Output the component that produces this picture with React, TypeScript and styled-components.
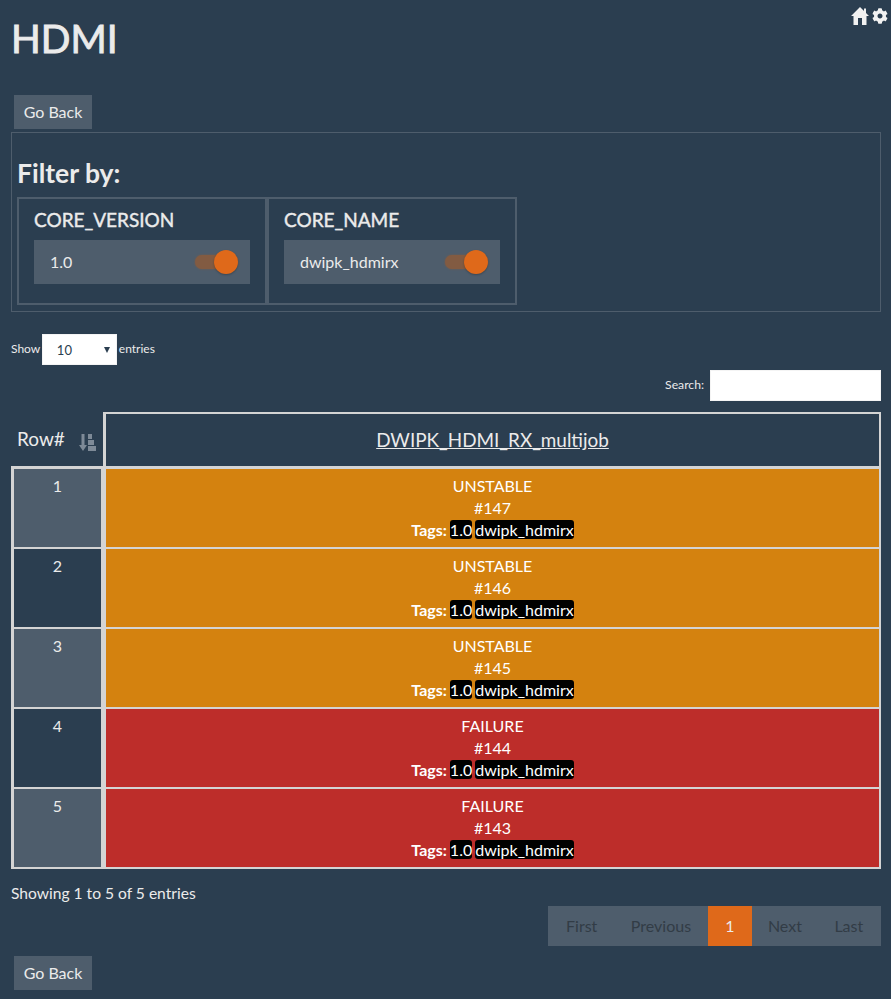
import React from "react";
import styled, { createGlobalStyle } from "styled-components";
import { FaCog } from "react-icons/fa";

const Global = createGlobalStyle`
  html, body { margin: 0; padding: 0; background: #2b3e50; }
  body { font-family: Lato, "Liberation Sans", sans-serif; font-size: 16px; color: #ebebeb; line-height: 22px; }
`;
const Page = styled.div`position: relative; box-sizing: border-box; width: 891px; height: 999px; padding: 0 10px 0 11px; overflow: hidden;`;
const TopIcons = styled.div`position: absolute; top: 7px; right: 3px; display: flex; gap: 3px; color: #f2f2f2; line-height: 0;`;
const GearIcon = styled(FaCog)`margin-top: 1px; width: 16px; height: 16px;`;
const Title = styled.h1`margin: 0; padding-top: 17px; font-size: 39px; line-height: 43px; font-weight: 400; height: 78px; -webkit-text-stroke: 0.9px #ebebeb;`;
const GoBack = styled.button`
  display: block; margin-left: 3px; width: 78px; height: 34px; padding: 0 0 2px; border: 0; border-radius: 0;
  background: #4e5d6c; color: #ebebeb; font: 400 16px Lato, sans-serif;
`;
const FilterPanel = styled.section`margin-top: 3px; height: 178px; border: 1px solid #4e5d6c; padding: 0 5px;`;
const FilterTitle = styled.h3`margin: 0; padding-top: 24px; height: 40px; font-size: 26.5px; line-height: 32px; font-weight: 700;`;
const FilterRow = styled.div`display: flex; gap: 0;`;
const FilterBox = styled.div`width: 250px; height: 108px; box-sizing: border-box; border: 2px solid #4e5d6c; padding: 0 15px;`;
const FilterName = styled.h4`margin: 0; padding-top: 10px; height: 31px; font-size: 19px; line-height: 22px; font-weight: 400; -webkit-text-stroke: 0.4px #ebebeb;`;
const FilterItem = styled.div`display: flex; align-items: center; justify-content: space-between; height: 44px; background: #4e5d6c; padding: 0 12px 0 16px;`;
const Switch = styled.span`position: relative; display: block; width: 43px; height: 14px; border-radius: 8px; background: #825b42; box-shadow: 0 0 2px #825b42;`;
const Knob = styled.span`position: absolute; right: 0; top: -5px; width: 24px; height: 24px; border-radius: 50%; background: #df691a; box-shadow: 0 1px 2px rgba(0,0,0,.25);`;
const LengthRow = styled.div`margin-top: 22px; display: flex; align-items: flex-start; height: 31px; font-size: 12px; line-height: 29px;`;
const SelectWrap = styled.div`position: relative; margin: 0 2px 0 1.6px; width: 75px; height: 31px;`;
const Select = styled.select`
  appearance: none; width: 100%; height: 100%; border: 1px solid #f4f4f4; border-radius: 0; background: #fff; color: #2b3e50;
  font: 400 13px Lato, sans-serif; padding: 0 0 0 14px;
`;
const Caret = styled.span`position: absolute; top: 13px; right: 7px; border: 3px solid transparent; border-top: 6px solid #2b3e50; border-bottom: 0;`;
const SearchRow = styled.div`margin-top: 5px; display: flex; justify-content: flex-end; align-items: flex-start; gap: 6px; height: 31px; font-size: 12.2px; line-height: 29px;`;
const SearchInput = styled.input`box-sizing: border-box; width: 171px; height: 31px; border: 1px solid #f4f4f4; background: #fff; padding: 0;`;
const Table = styled.div`margin-top: 11px; width: 870px;`;
const HeaderRow = styled.div`display: flex; height: 54px;`;
const RowHead = styled.div`display: flex; align-items: center; box-sizing: border-box; width: 92px; padding-left: 6px; padding-bottom: 1px; font-size: 19px;`;
const SortIcon = styled.svg`margin-left: 14px; margin-top: 7px; width: 17px; height: 17px; fill: #7e8a97;`;
const JobHead = styled.div`
  flex: 1; display: flex; align-items: center; justify-content: center; box-sizing: border-box;
  border: solid #d4d4d4; border-width: 2px 2px 0 3px; font-size: 18.9px; text-decoration: underline;
`;
const Row = styled.div`
  display: flex; height: 80px; box-sizing: border-box; border-top: 2px solid #d4d4d4;
  &:first-of-type { height: 81px; border-top-width: 3px; }
`;
const Body = styled.div`border-bottom: 2px solid #d4d4d4;`;
const NumCell = styled.div<{ $odd: boolean }>`
  box-sizing: border-box; width: 92px; border-left: 3px solid #d4d4d4; border-right: 2px solid #d4d4d4; text-align: center; padding-top: 6px;
  background: ${p => (p.$odd ? "#4e5d6c" : "#2b3e50")};
`;
const BuildCell = styled.div<{ $status: string }>`
  flex: 1; box-sizing: border-box; border-left: 3px solid #d4d4d4; border-right: 2px solid #d4d4d4; text-align: center; color: #fff; padding-top: 6px;
  background: ${p => (p.$status === "FAILURE" ? "#bd2d2a" : "#d4820f")};
`;
const Line = styled.div``;
const Tag = styled.span`background: #000; color: #fff; border-radius: 3px; margin-left: 3px;`;
const FooterRow = styled.div`margin-top: 13px; font-size: 15.6px;`;
const Pager = styled.nav`display: flex; justify-content: flex-end; margin-top: 2px;`;
const PageItem = styled.span<{ $active?: boolean }>`
  display: flex; align-items: center; height: 40px; padding: 0 ${p => (p.$active ? "17.5px" : "16.75px")};
  background: ${p => (p.$active ? "#df691a" : "#4e5d6c")}; color: ${p => (p.$active ? "#ebebeb" : "#323c46")};
  &:first-child { padding-left: 17.75px; }
  &:nth-child(4) { padding-left: 15.75px; }
  &:last-child { padding-left: 15.75px; padding-right: 17.75px; }
`;
const BottomBack = styled(GoBack)`margin-top: 10px;`;

const rows = [
  { n: 1, status: "UNSTABLE", build: 147 },
  { n: 2, status: "UNSTABLE", build: 146 },
  { n: 3, status: "UNSTABLE", build: 145 },
  { n: 4, status: "FAILURE", build: 144 },
  { n: 5, status: "FAILURE", build: 143 },
];
const filters = [
  { name: "CORE_VERSION", value: "1.0" },
  { name: "CORE_NAME", value: "dwipk_hdmirx" },
];

const HomeIcon = () => (
  <svg width="18" height="18" viewBox="0 0 18 18" fill="currentColor">
    <path d="M9 0 L13 4 V1.5 H15 V6 L18 9 H15.5 V18 H11 V11 H7 V18 H2.5 V9 H0 Z" />
  </svg>
);

export default function App() {
  return (
    <Page>
      <Global />
      <TopIcons><HomeIcon /><GearIcon /></TopIcons>
      <Title>HDMI</Title>
      <GoBack>Go Back</GoBack>
      <FilterPanel>
        <FilterTitle>Filter by:</FilterTitle>
        <FilterRow>
          {filters.map(f => (
            <FilterBox key={f.name}>
              <FilterName>{f.name}</FilterName>
              <FilterItem>{f.value}<Switch><Knob /></Switch></FilterItem>
            </FilterBox>
          ))}
        </FilterRow>
      </FilterPanel>
      <LengthRow>
        Show
        <SelectWrap><Select defaultValue="10"><option>10</option></Select><Caret /></SelectWrap>
        entries
      </LengthRow>
      <SearchRow>Search:<SearchInput /></SearchRow>
      <Table>
        <HeaderRow>
          <RowHead>
            Row#
            <SortIcon viewBox="0 0 17 17">
              <path d="M2.5 0 H5.5 V11 H8 L4 17 L0 11 H2.5 Z" />
              <path d="M9 0 H13 V5 H9 Z M9 6 H15 V11 H9 Z M9 12 H17 V17 H9 Z" />
            </SortIcon>
          </RowHead>
          <JobHead>DWIPK_HDMI_RX_multijob</JobHead>
        </HeaderRow>
        <Body>
          {rows.map(r => (
            <Row key={r.n}>
              <NumCell $odd={r.n % 2 === 1}>{r.n}</NumCell>
              <BuildCell $status={r.status}>
                <Line>{r.status}</Line>
                <Line>#{r.build}</Line>
                <Line><b>Tags:</b><Tag>1.0</Tag><Tag>dwipk_hdmirx</Tag></Line>
              </BuildCell>
            </Row>
          ))}
        </Body>
      </Table>
      <FooterRow>Showing 1 to 5 of 5 entries</FooterRow>
      <Pager>
        <PageItem>First</PageItem>
        <PageItem>Previous</PageItem>
        <PageItem $active>1</PageItem>
        <PageItem>Next</PageItem>
        <PageItem>Last</PageItem>
      </Pager>
      <BottomBack>Go Back</BottomBack>
    </Page>
  );
}
